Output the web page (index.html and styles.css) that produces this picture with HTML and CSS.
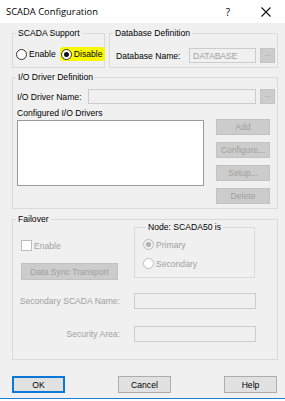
FILE: index.html
```html
<!DOCTYPE html>
<html>
<head>
<meta charset="utf-8">
<link rel="stylesheet" href="styles.css">
</head>
<body>
<div class="window">
  <div class="titlebar">
    <span class="title">SCADA Configuration</span>
    <span class="tb-help">?</span>
    <span class="tb-close"><svg width="10" height="10" viewBox="0 0 10 10"><path d="M0.5 0.5L9.5 9.5M9.5 0.5L0.5 9.5" stroke="#111" stroke-width="1.1" fill="none"/></svg></span>
  </div>
  <div class="content">
    <div class="row-top">
      <section class="grp scada">
        <div class="grp-title">SCADA Support</div>
        <div class="radios">
          <span class="radio"><span class="dot"></span><span>Enable</span></span>
          <span class="radio hl"><span class="dot on"></span><span>Disable</span></span>
        </div>
      </section>
      <section class="grp db">
        <div class="grp-title">Database Definition</div>
        <div class="db-row">
          <span class="db-label">Database Name:</span>
          <span class="field db-field dis-text">DATABASE</span>
          <span class="ell">...</span>
        </div>
      </section>
    </div>

    <section class="grp io">
      <div class="grp-title">I/O Driver Definition</div>
      <div class="io-name-row">
        <span class="io-label">I/O Driver Name:</span>
        <span class="field io-field"></span>
        <span class="ell">...</span>
      </div>
      <div class="cfg-label">Configured I/O Drivers</div>
      <div class="io-list-row">
        <div class="listbox"></div>
        <div class="btn-col">
          <span class="btn dis">Add</span>
          <span class="btn dis">Configure...</span>
          <span class="btn dis">Setup...</span>
          <span class="btn dis">Delete</span>
        </div>
      </div>
    </section>

    <section class="grp failover">
      <div class="grp-title">Failover</div>
      <div class="fo-top">
        <div class="fo-left">
          <div class="check-row"><span class="check"></span><span class="dis-text">Enable</span></div>
          <span class="btn dis dst">Data Sync Transport</span>
        </div>
        <section class="grp node">
          <div class="grp-title">Node: SCADA50 is</div>
          <div class="node-radio"><span class="dot dis on"></span><span class="dis-text">Primary</span></div>
          <div class="node-radio"><span class="dot dis"></span><span class="dis-text">Secondary</span></div>
        </section>
      </div>
      <div class="fo-grid">
        <span class="fo-label dis-text">Secondary SCADA Name:</span>
        <span class="field"></span>
        <span class="fo-label dis-text">Security Area:</span>
        <span class="field"></span>
      </div>
    </section>

    <div class="actions">
      <span class="btn ok">OK</span>
      <span class="btn">Cancel</span>
      <span class="btn">Help</span>
    </div>
  </div>
</div>
</body>
</html>
```

FILE: styles.css
```css
* { box-sizing: border-box; }
html, body { margin: 0; padding: 0; }
body {
  width: 285px;
  height: 401px;
  background: #fff;
  font-family: "Liberation Sans", Arial, sans-serif;
  font-size: 8.6px;
  line-height: 10px;
  color: #000;
  overflow: hidden;
}
.window {
  height: 399px;
  background: #f0f0f0;
  border-bottom: 1px solid #1c7fd6;
  display: flex;
  flex-direction: column;
}
.titlebar {
  height: 23px;
  flex: none;
  background: #fff;
  display: flex;
  align-items: center;
  font-family: "Open Sans", "Liberation Sans", sans-serif;
  font-size: 9.4px;
}
.title { flex: 1; padding-left: 6px; }
.tb-help { width: 12px; text-align: center; margin-right: 27px; font-size: 10px; }
.tb-close { width: 10px; height: 10px; margin-right: 14px; display: flex; }

.content {
  padding: 0 7px 0 12px;
  display: flex;
  flex-direction: column;
}
.grp {
  border: 1px solid #dadada;
}
.grp-title {
  width: fit-content;
  margin: -6px 0 0 3px;
  padding: 0 2px;
  background: #f0f0f0;
  line-height: 10px;
}
.row-top { display: flex; gap: 4px; margin-top: 10px; }
.scada { width: 93px; height: 35px; }
.db { width: 170px; height: 35px; }

.radios { display: flex; align-items: center; margin-top: 9px; padding-left: 3px; height: 14px; }
.radio { display: flex; align-items: center; gap: 2px; }
.hl {
  background: #f8f800;
  border-radius: 3px;
  height: 14px;
  padding: 0 3px 0 1px;
  margin-left: 4px;
}
.dot {
  width: 11px; height: 11px;
  border-radius: 50%;
  border: 1px solid #333;
  background: #fff;
  display: flex;
  align-items: center;
  justify-content: center;
  flex: none;
}
.dot.on::after {
  content: "";
  width: 5px; height: 5px;
  border-radius: 50%;
  background: #111;
}
.dot.dis { border-color: #bcbcbc; }
.dot.dis.on { background: #f0f0f0; }
.dot.dis.on::after { background: #b0b0b0; }

.db-row { display: flex; align-items: center; margin-top: 10px; padding-left: 6px; height: 15px; }
.db-label { width: 73px; }
.field {
  height: 15px;
  border: 1px solid #cccccc;
  background: #f0f0f0;
  display: flex;
  align-items: center;
  padding-left: 3px;
}
.db-field { width: 67px; }
.dis-text { color: #a0a0a0; }
.ell {
  width: 15px; height: 15px;
  margin-left: 4px;
  background: #cccccc;
  border: 1px solid #c4c4c4;
  color: #9a9a9a;
  font-size: 7px;
  line-height: 10px;
  text-align: center;
}

.io { margin-top: 9px; height: 132px; }
.io-name-row { display: flex; align-items: center; margin-top: 7px; padding-left: 4px; height: 15px; }
.io-label { width: 71px; }
.io-field { width: 168px; }
.cfg-label { margin-top: 4px; padding-left: 4px; }
.io-list-row { display: flex; margin-top: 1px; padding-left: 4px; }
.listbox {
  width: 187px; height: 66px;
  margin-top: 1px;
  background: #fff;
  border: 1px solid #9a9a9a;
}
.btn-col { display: flex; flex-direction: column; gap: 7px; margin-left: 12px; }
.btn {
  width: 53px; height: 16px;
  display: flex; align-items: center; justify-content: center;
  background: #e1e1e1;
  border: 1px solid #adadad;
}
.btn.dis {
  background: #cccccc;
  border-color: #c2c2c2;
  color: #a0a0a0;
}
.btn-col .btn { width: 54px; }

.failover { margin-top: 10px; height: 141px; }
.fo-top { display: flex; }
.fo-left { width: 121px; padding-left: 8px; display: flex; flex-direction: column; }
.check-row { display: flex; align-items: center; gap: 2px; margin-top: 16px; height: 11px; }
.check {
  width: 11px; height: 11px;
  background: #fff;
  border: 1px solid #bcbcbc;
}
.btn.dst { width: 97px; height: 17px; margin-top: 12px; }
.node { width: 121px; height: 51px; margin-top: 3px; padding-left: 8px; }
.node-radio { display: flex; align-items: center; gap: 2px; height: 13px; margin-top: 6px; }
.fo-grid {
  display: grid;
  grid-template-columns: 107px 122px;
  grid-auto-rows: 16px;
  column-gap: 14px;
  row-gap: 17px;
  margin-top: 13px;
}
.fo-label { text-align: right; align-self: center; }
.fo-grid .field { height: 16px; }

.actions {
  display: flex;
  justify-content: space-between;
  margin-top: 16px;
  padding-right: 1px;
}
.actions .btn { height: 17px; }
.btn.ok { border: 2px solid #0a78d8; }
```
